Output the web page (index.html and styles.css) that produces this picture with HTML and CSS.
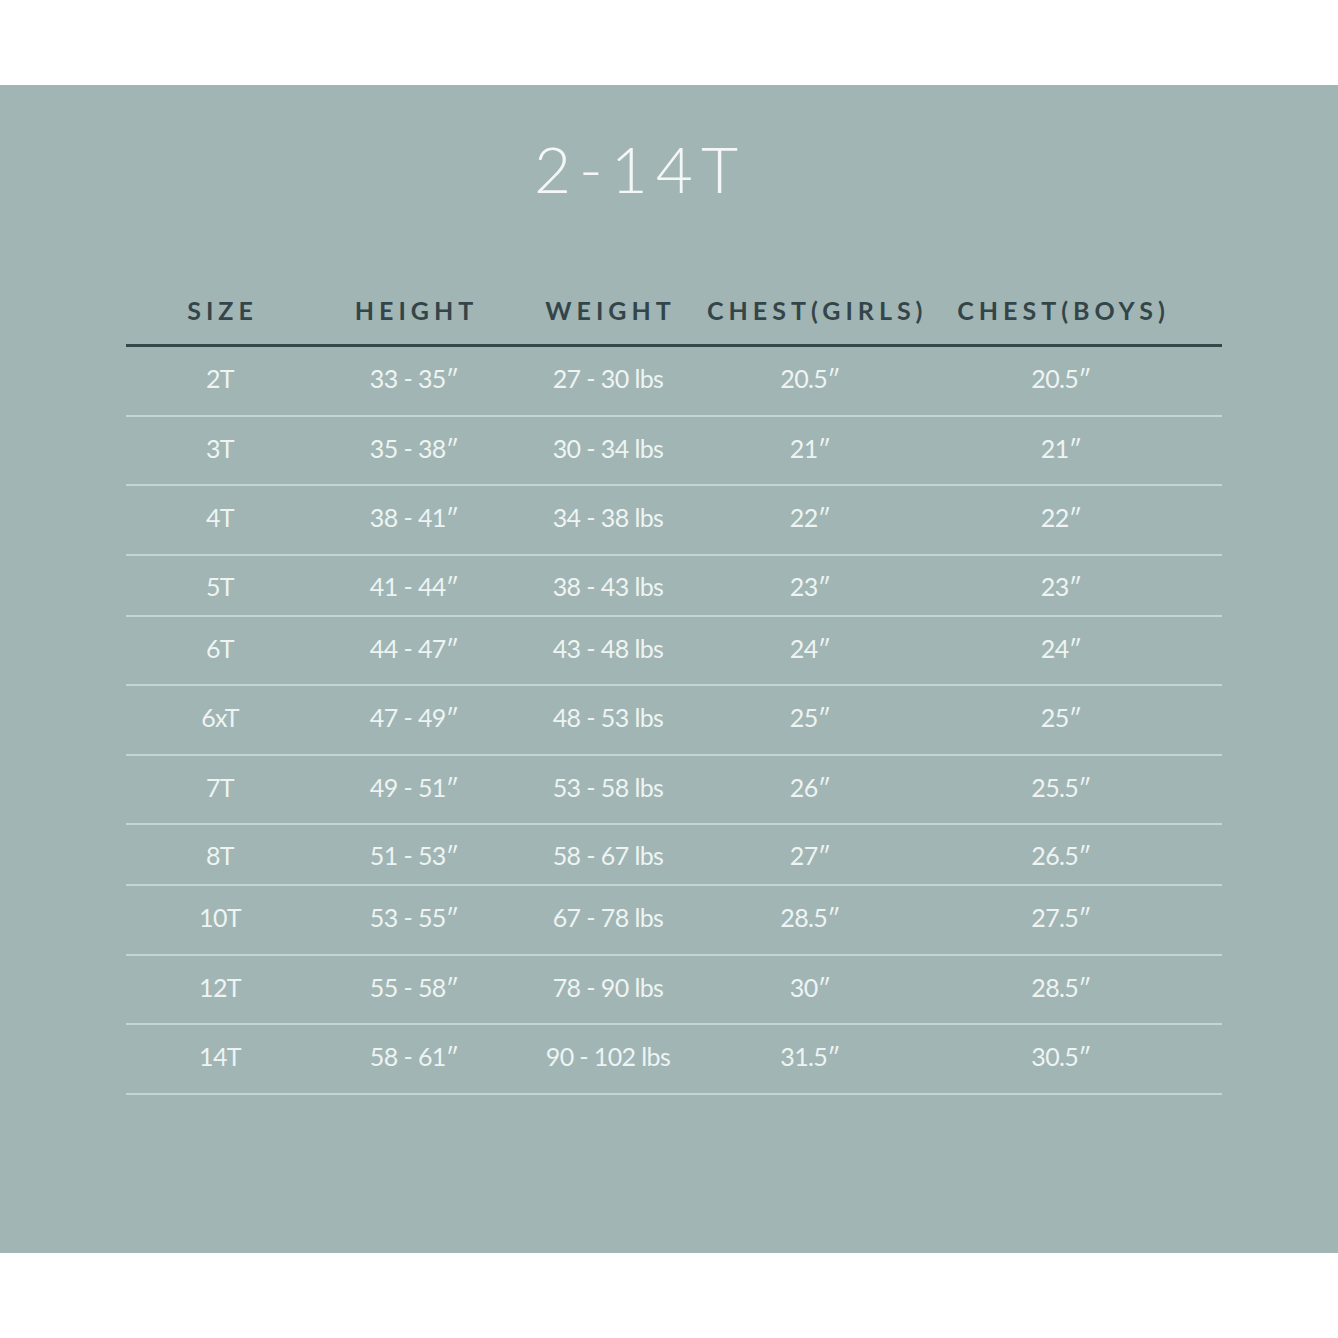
FILE: index.html
```html
<!DOCTYPE html>
<html lang="en">
<head>
<meta charset="utf-8">
<title>2-14T Size Chart</title>
<link rel="stylesheet" href="styles.css">
</head>
<body>
<section class="panel">
  <h1 class="title">2-14T</h1>
  <div class="table">
    <div class="row head">
      <div class="cell">SIZE</div>
      <div class="cell">HEIGHT</div>
      <div class="cell">WEIGHT</div>
      <div class="cell">CHEST(GIRLS)</div>
      <div class="cell last">CHEST(BOYS)</div>
    </div>
    <div class="row">
      <div class="cell">2T</div><div class="cell">33 - 35″</div><div class="cell">27 - 30 lbs</div><div class="cell">20.5″</div><div class="cell last">20.5″</div>
    </div>
    <div class="row">
      <div class="cell">3T</div><div class="cell">35 - 38″</div><div class="cell">30 - 34 lbs</div><div class="cell">21″</div><div class="cell last">21″</div>
    </div>
    <div class="row">
      <div class="cell">4T</div><div class="cell">38 - 41″</div><div class="cell">34 - 38 lbs</div><div class="cell">22″</div><div class="cell last">22″</div>
    </div>
    <div class="row short">
      <div class="cell">5T</div><div class="cell">41 - 44″</div><div class="cell">38 - 43 lbs</div><div class="cell">23″</div><div class="cell last">23″</div>
    </div>
    <div class="row">
      <div class="cell">6T</div><div class="cell">44 - 47″</div><div class="cell">43 - 48 lbs</div><div class="cell">24″</div><div class="cell last">24″</div>
    </div>
    <div class="row">
      <div class="cell">6xT</div><div class="cell">47 - 49″</div><div class="cell">48 - 53 lbs</div><div class="cell">25″</div><div class="cell last">25″</div>
    </div>
    <div class="row">
      <div class="cell">7T</div><div class="cell">49 - 51″</div><div class="cell">53 - 58 lbs</div><div class="cell">26″</div><div class="cell last">25.5″</div>
    </div>
    <div class="row short">
      <div class="cell">8T</div><div class="cell">51 - 53″</div><div class="cell">58 - 67 lbs</div><div class="cell">27″</div><div class="cell last">26.5″</div>
    </div>
    <div class="row">
      <div class="cell">10T</div><div class="cell">53 - 55″</div><div class="cell">67 - 78 lbs</div><div class="cell">28.5″</div><div class="cell last">27.5″</div>
    </div>
    <div class="row">
      <div class="cell">12T</div><div class="cell">55 - 58″</div><div class="cell">78 - 90 lbs</div><div class="cell">30″</div><div class="cell last">28.5″</div>
    </div>
    <div class="row">
      <div class="cell">14T</div><div class="cell">58 - 61″</div><div class="cell">90 - 102 lbs</div><div class="cell">31.5″</div><div class="cell last">30.5″</div>
    </div>
  </div>
</section>
</body>
</html>
```
FILE: styles.css
```css
* { box-sizing: border-box; }
html, body { margin: 0; padding: 0; background: #ffffff; }
body {
  padding-top: 85px;
  font-family: Lato, "Liberation Sans", sans-serif;
}
.panel {
  width: 1338px;
  height: 1168px;
  background: #a1b5b5;
  padding-top: 52px;
}
.title {
  margin: 0;
  font-family: Lato, "Liberation Sans", sans-serif;
  font-weight: 300;
  font-size: 64px;
  line-height: 64px;
  letter-spacing: 8px;
  color: #f4f7f6;
  text-align: center;
  padding-right: 58px;
}
.table {
  margin: 97px 0 0 126px;
  width: 1096px;
}
.row {
  display: grid;
  grid-template-columns: 188px 200px 188px 216px 1fr;
  align-items: center;
  height: 69.5px;
  padding-bottom: 4px;
  border-bottom: 2px solid #c4d5d3;
  color: #eef4f2;
  font-size: 25px;
  letter-spacing: -0.6px;
  line-height: 1;
}
.row.short { height: 61px; padding-bottom: 0; padding-top: 2px; }
.cell { text-align: center; }
.cell.last { padding-right: 18px; }
.row.head {
  height: auto;
  align-items: start;
  padding-top: 0;
  padding-bottom: 21px;
  border-bottom: 3px solid #34474a;
  color: #34454a;
  font-weight: 700;
  font-size: 25px;
  letter-spacing: 5px;
}
.row.head .cell { padding-left: 5px; }
.row.head .cell.last { padding-left: 5px; padding-right: 18px; }
```
